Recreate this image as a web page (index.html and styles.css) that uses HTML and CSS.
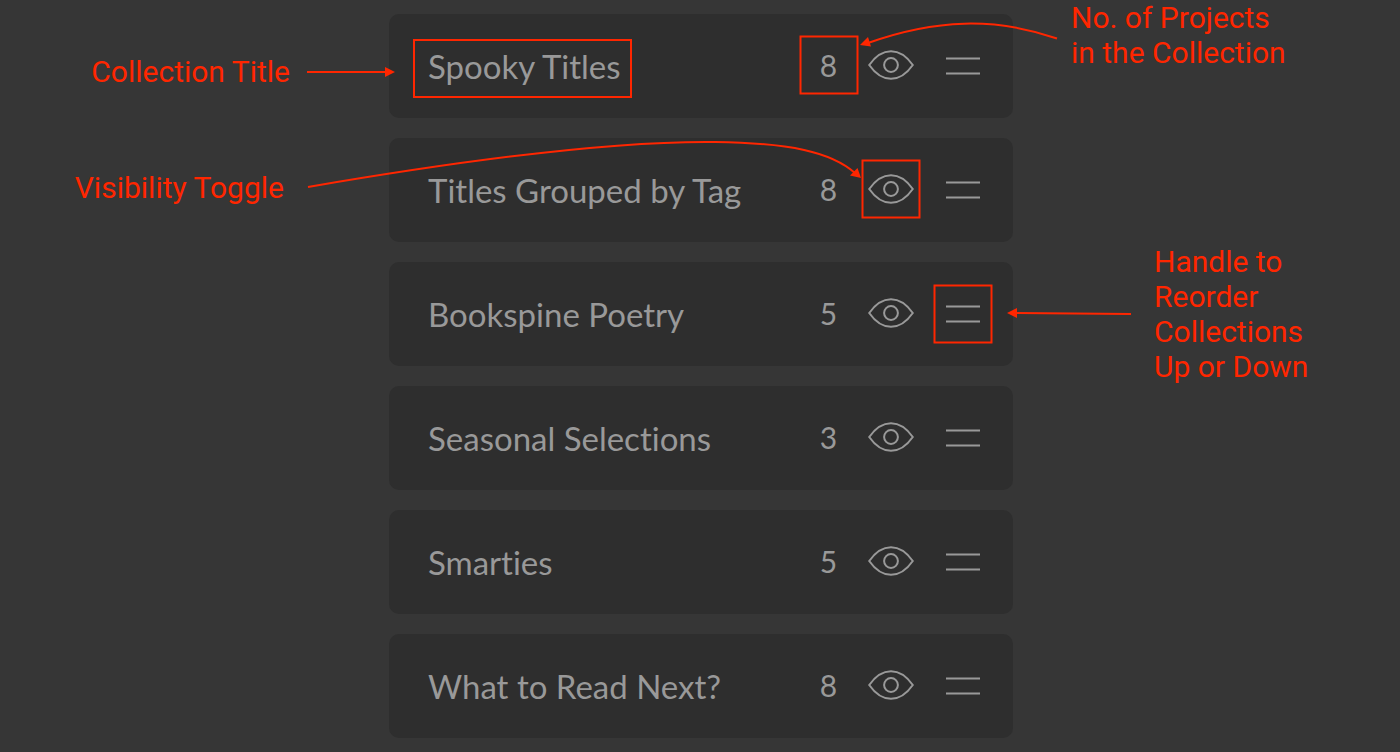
FILE: index.html
```
<!DOCTYPE html>
<html lang="en">
<head>
<meta charset="utf-8">
<title>Collections</title>
<link rel="stylesheet" href="styles.css">
</head>
<body>
<svg class="symbols" aria-hidden="true">
  <symbol id="eye" viewBox="0 0 46 30">
    <path d="M1.200 15C7.500 6 14.500 1.200 23 1.200S38.500 6 44.800 15C38.500 24 31.500 28.800 23 28.800S7.500 24 1.200 15Z"/>
    <circle cx="23" cy="15" r="6.900"/>
  </symbol>
  <symbol id="handle" viewBox="0 0 34 18">
    <path d="M0 1.500H34M0 16.500H34"/>
  </symbol>
</svg>
<main class="guide">
  <aside class="notes notes-left">
    <p class="note note-title">Collection Title</p>
    <p class="note note-visibility">Visibility Toggle</p>
  </aside>
  <section class="board">
    <ul class="collections">
      <li class="collection">
        <span class="name marked marked-name">Spooky Titles</span>
        <span class="count marked">8</span>
        <button class="toggle" aria-label="Toggle visibility"><svg class="eye"><use href="#eye"/></svg></button>
        <button class="grip" aria-label="Reorder"><svg class="handle"><use href="#handle"/></svg></button>
      </li>
      <li class="collection">
        <span class="name">Titles Grouped by Tag</span>
        <span class="count">8</span>
        <button class="toggle marked" aria-label="Toggle visibility"><svg class="eye"><use href="#eye"/></svg></button>
        <button class="grip" aria-label="Reorder"><svg class="handle"><use href="#handle"/></svg></button>
      </li>
      <li class="collection">
        <span class="name">Bookspine Poetry</span>
        <span class="count">5</span>
        <button class="toggle" aria-label="Toggle visibility"><svg class="eye"><use href="#eye"/></svg></button>
        <button class="grip marked" aria-label="Reorder"><svg class="handle"><use href="#handle"/></svg></button>
      </li>
      <li class="collection">
        <span class="name">Seasonal Selections</span>
        <span class="count">3</span>
        <button class="toggle" aria-label="Toggle visibility"><svg class="eye"><use href="#eye"/></svg></button>
        <button class="grip" aria-label="Reorder"><svg class="handle"><use href="#handle"/></svg></button>
      </li>
      <li class="collection">
        <span class="name">Smarties</span>
        <span class="count">5</span>
        <button class="toggle" aria-label="Toggle visibility"><svg class="eye"><use href="#eye"/></svg></button>
        <button class="grip" aria-label="Reorder"><svg class="handle"><use href="#handle"/></svg></button>
      </li>
      <li class="collection">
        <span class="name">What to Read Next?</span>
        <span class="count">8</span>
        <button class="toggle" aria-label="Toggle visibility"><svg class="eye"><use href="#eye"/></svg></button>
        <button class="grip" aria-label="Reorder"><svg class="handle"><use href="#handle"/></svg></button>
      </li>
    </ul>
    <svg class="arrows" viewBox="389 0 624 752" aria-hidden="true">
      <g class="shafts">
        <path d="M307 72H387"/>
        <path d="M308 187C500 154 632 141 715 142C790 143 831 152 855 173"/>
        <path d="M1057 38.500C995 17 935 19 868 43"/>
        <path d="M1131 314L1015 313"/>
      </g>
      <g class="heads">
        <path d="M395 72L385 67V77Z"/>
        <path d="M861 178L857.500 168L850 175.500Z"/>
        <path d="M860 45L868 37L871 46.500Z"/>
        <path d="M1007 313L1017 308V318Z"/>
      </g>
    </svg>
  </section>
  <aside class="notes notes-right">
    <p class="note note-count">No. of Projects<br>in the Collection</p>
    <p class="note note-handle">Handle to<br>Reorder<br>Collections<br>Up or Down</p>
  </aside>
</main>
</body>
</html>
```
FILE: styles.css
```
*,
*::after { box-sizing: border-box; }

body {
  margin: 0;
  background: #363636;
  color: #999;
}

.symbols {
  position: absolute;
  width: 0;
  height: 0;
}

.guide {
  display: grid;
  grid-template-columns: 1fr 624px 1fr;
  padding-left: 2px;
}

.notes {
  display: flex;
  flex-direction: column;
}

.note {
  margin: 0;
  color: #ff2600;
  font: 30px/35px Roboto, sans-serif;
  white-space: nowrap;
}

.notes-left {
  align-items: flex-end;
  gap: 81px;
  padding-top: 54px;
}

.note-title { margin-right: 99px; }
.note-visibility { margin-right: 105px; }

.notes-right { gap: 174px; }
.note-count { margin-left: 58px; }
.note-handle { margin-left: 141px; }

.board { position: relative; }

.collections {
  display: flex;
  flex-direction: column;
  gap: 20px;
  margin: 0;
  padding: 14px 0;
  list-style: none;
}

.collection {
  display: flex;
  align-items: center;
  height: 104px;
  padding: 0 33px 0 39px;
  border-radius: 10px;
  background: #2e2e2e;
  font: 33px/39px Lato, sans-serif;
  font-variant-ligatures: none;
}

.name {
  margin: 0 auto 0 0;
  padding-bottom: 1px;
  line-height: 40px;
  white-space: nowrap;
}

.count {
  width: 21px;
  margin: 0 29px 2px 0;
  font-size: 30px;
  text-align: center;
}

.toggle,
.grip {
  display: flex;
  align-items: center;
  justify-content: center;
  padding: 0;
  border: 0;
  background: none;
}

.toggle {
  width: 46px;
  margin: 0 32px 2px 0;
}

.grip { width: 34px; }

.eye,
.handle {
  fill: none;
  stroke: #999;
  stroke-width: 2;
}

.eye {
  width: 46px;
  height: 30px;
}

.handle {
  width: 34px;
  height: 18px;
}

.marked { position: relative; }

.marked::after {
  content: "";
  position: absolute;
  inset: 50% auto auto 50%;
  width: 59px;
  height: 59px;
  border: 2px solid #ff2600;
  transform: translate(-50%, -50%);
}

.marked-name::after {
  inset: -7px -11px auto -15px;
  width: auto;
  transform: none;
}

.arrows {
  position: absolute;
  top: 0;
  left: 0;
  width: 624px;
  height: 752px;
  overflow: visible;
  pointer-events: none;
}

.shafts {
  fill: none;
  stroke: #ff2600;
  stroke-width: 2;
}

.heads { fill: #ff2600; }
```
